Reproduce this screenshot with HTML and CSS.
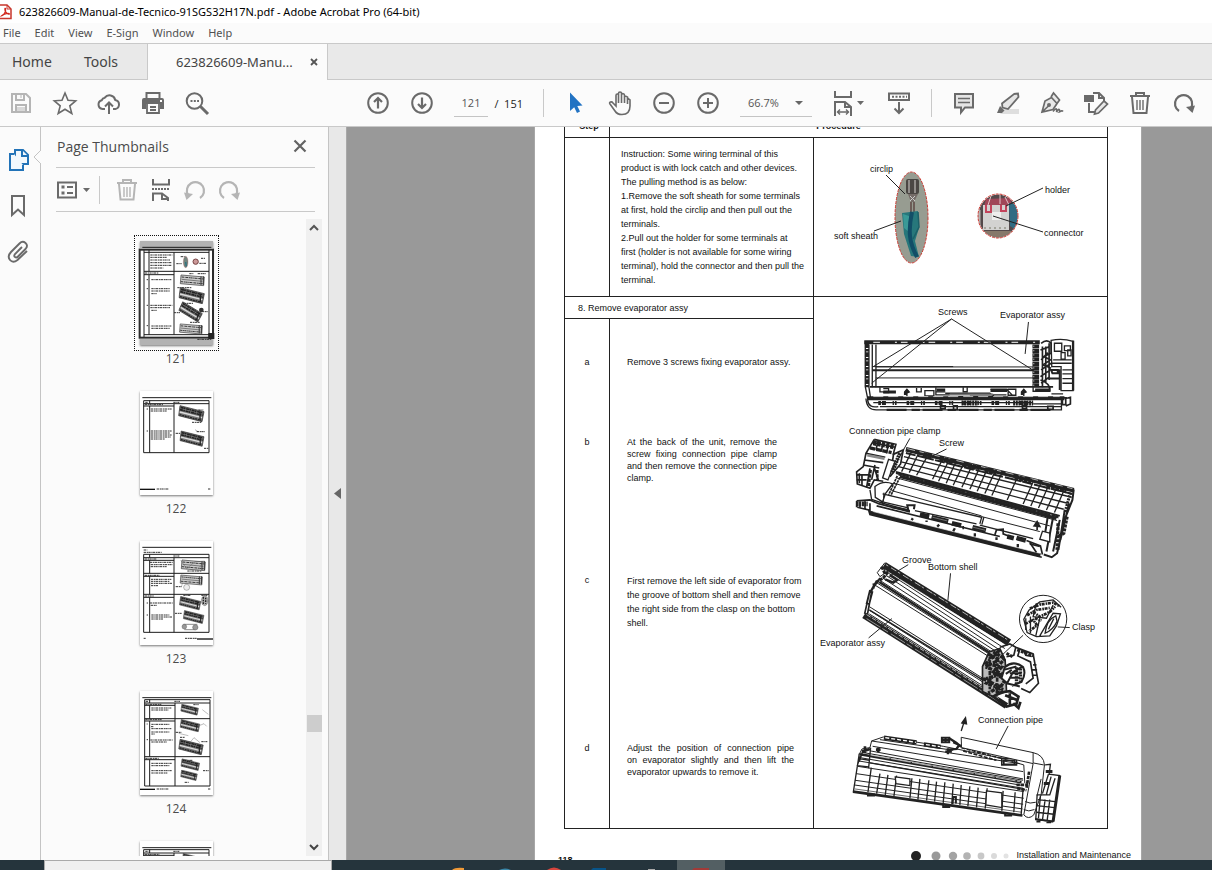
FILE: index.html
```html
<!DOCTYPE html>
<html lang="en">
<head>
<meta charset="utf-8">
<title>623826609-Manual-de-Tecnico-91SGS32H17N.pdf - Adobe Acrobat Pro (64-bit)</title>
<link rel="stylesheet" href="styles.css">
</head>
<body>
<svg class="defs" aria-hidden="true">
  <defs>
    <symbol id="unit" viewBox="0 0 80 52">
      <path d="M6 2L78 20L72 50L2 32Z" fill="#777" stroke="#222" stroke-width="2"/>
      <path d="M8 7L75 24M6 14L74 31" stroke="#222" stroke-width="5" stroke-dasharray="9 1 5 2"/>
      <path d="M5 21L72 38" stroke="#ddd" stroke-width="4"/>
      <path d="M5 29L70 46" stroke="#222" stroke-width="4" stroke-dasharray="6 2"/>
      <path d="M66 20V46" stroke="#222" stroke-width="4"/>
    </symbol>
    <symbol id="unit-light" viewBox="0 0 80 40">
      <path d="M6 4L76 10L74 36L4 30Z" fill="#ccc" stroke="#333" stroke-width="2"/>
      <path d="M8 10L74 16M6 24L72 30" stroke="#333" stroke-width="3" stroke-dasharray="7 2 3 1"/>
      <path d="M8 17L70 23" stroke="#777" stroke-width="3"/>
      <path d="M66 8V34M73 8V34" stroke="#333" stroke-width="3"/>
    </symbol>
  </defs>
</svg>
<div class="app">
  <header class="titlebar">
    <svg class="logo" viewBox="0 0 14 16"><path d="M-1 1H7L11 5V14.500H-1Z" fill="#fff" stroke="#c8372d" stroke-width="1.500"/><path d="M7 1V5H11" fill="none" stroke="#c8372d"/><path d="M2 11.500C4 11 6 8 5.500 4.500C5 4 4.500 5 5.500 7.500C6.500 9.500 8 10.500 9.500 10C9 9 4 9.500 2 11.500Z" fill="none" stroke="#d2281e" stroke-width="1.300"/></svg>
    <span>623826609-Manual-de-Tecnico-91SGS32H17N.pdf - Adobe Acrobat Pro (64-bit)</span>
  </header>
  <nav class="menubar">
    <button>File</button><button>Edit</button><button>View</button><button>E-Sign</button><button>Window</button><button>Help</button>
  </nav>
  <div class="tabs">
    <button class="tab-home">Home</button>
    <button class="tab-tools">Tools</button>
    <div class="tab-doc"><span>623826609-Manu...</span>
      <button class="tab-close" aria-label="Close tab"><svg viewBox="0 0 8 8"><path d="M1 1L7 7M7 1L1 7" stroke="#555" stroke-width="1.800"/></svg></button>
    </div>
  </div>
  <div class="toolbar">
    <div class="group">
      <button class="tool faded" aria-label="Save"><svg viewBox="0 0 24 24"><path d="M3 3H17L21 7V21H3Z"/><path d="M7 3V9H15V3M7 21V14H17V21"/><path d="M8 17H16M8 19H16M12 4V7" stroke-width="1"/></svg></button>
      <button class="tool" aria-label="Star"><svg viewBox="0 0 24 24"><path stroke-width="1.600" d="M12 2L15 9.300L22.700 9.800L16.800 14.900L18.800 22.500L12 18.300L5.200 22.500L7.200 14.900L1.300 9.800L9 9.300Z"/></svg></button>
      <button class="tool" aria-label="Upload"><svg viewBox="0 0 24 24"><path d="M8 18H5.500A4.500 4.500 0 0 1 4.800 9.200A4 4 0 0 1 7.800 6.700A5.800 5.800 0 0 1 18.200 9A4.600 4.600 0 0 1 18.500 18H16"/><path d="M12 23V12M8 15.500L12 11.500L16 15.500"/></svg></button>
      <button class="tool" aria-label="Print"><svg viewBox="0 0 24 24"><path d="M5.500 7V2H18.500V7"/><path class="solid" d="M1 9Q1 7 3 7H21Q23 7 23 9V18H19V13H5V18H1Z"/><path d="M6 13V22H18V13M9 16H15M9 19H15" stroke-width="1.800"/><path d="M19 10H21" stroke="#fff"/></svg></button>
      <button class="tool" aria-label="Find"><svg viewBox="0 0 24 24"><circle cx="9.500" cy="10" r="7.800"/><path d="M15.500 15.500L23 23" stroke-width="3"/><path d="M5.500 10H14" stroke-dasharray="2 1.300"/></svg></button>
    </div>
    <div class="group view">
      <button class="tool" aria-label="Previous page"><svg viewBox="0 0 24 24"><circle cx="12" cy="12" r="9.800"/><path d="M12 17.500V7M8 11L12 7L16 11" stroke-width="2.200"/></svg></button>
      <button class="tool" aria-label="Next page"><svg viewBox="0 0 24 24"><circle cx="12" cy="12" r="9.800"/><path d="M12 6.500V17M8 13L12 17L16 13" stroke-width="2.200"/></svg></button>
      <label class="pager"><input type="text" value="121" aria-label="Page number"><span>/&nbsp; 151</span></label>
      <i class="sep"></i>
      <button class="tool" aria-label="Select"><svg viewBox="0 0 24 24"><path d="M6 1.500L18.500 14.500L13.300 15L16 20.500L13 22L10.200 16.300L6 20Z" fill="#2273c3" stroke="none"/></svg></button>
      <button class="tool" aria-label="Hand"><svg viewBox="0 0 24 24"><path stroke-width="1.600" d="M8 13V4.500Q8 3 9.300 3T10.500 4.500V2.500Q10.500 1 12 1T13.500 2.500V3.500Q14 2.500 15.300 2.700T16.500 4.500V6Q17 5 18.500 5.400T19.500 7L22 9V15Q22 23.500 14 23.500Q9 23.500 7 20L2 13Q1 11.500 2.500 11T5 12L8 15ZM10.500 4V12M13.500 3V12M16.500 5V12M19.500 7V13"/></svg></button>
      <button class="tool" aria-label="Zoom out"><svg viewBox="0 0 24 24"><circle cx="12" cy="12" r="9.800"/><path d="M7 12H17"/></svg></button>
      <button class="tool" aria-label="Zoom in"><svg viewBox="0 0 24 24"><circle cx="12" cy="12" r="9.800"/><path d="M7 12H17M12 7V17"/></svg></button>
      <div class="zoom"><select aria-label="Zoom level"><option>66.7%</option></select></div>
      <button class="tool fit" aria-label="Fit width"><svg viewBox="0 0 35 26"><path d="M3 1V7H19V1M3 26V12H13L19 17V26M13 12V17H19"/><path d="M5 22H17M8 19.500L5.500 22L8 24.500M14 19.500L16.500 22L14 24.500" stroke-width="1.400"/><path class="solid" d="M25 11H32L28.500 15Z"/></svg></button>
      <button class="tool" aria-label="Keyboard"><svg viewBox="0 0 24 24"><path d="M2 2.500H22V9H2Z"/><path d="M5 5.700H20" stroke-dasharray="2 1.500"/><path d="M12 11V22M7.500 17.500L12 22L16.500 17.500"/></svg></button>
      <i class="sep"></i>
      <button class="tool" aria-label="Comment"><svg viewBox="0 0 24 24"><path d="M3 3H21V16.500H13L9 21.500V16.500H3Z" fill="#e5e5e5"/><path d="M6 7.500H18M6 11.500H18" stroke-width="1.400"/></svg></button>
      <button class="tool" aria-label="Highlight"><svg viewBox="0 0 24 24"><path d="M8 18H23V23H4Z" fill="#dedede" stroke="none"/><path fill="#e5e5e5" stroke-width="1.800" d="M18 3L22 2.500L22.500 6L12 18L6.500 16.500L6 12.500Z"/><path class="solid" d="M4 15L8.500 19.500L6 22H1Z"/></svg></button>
      <button class="tool" aria-label="Sign"><svg viewBox="0 0 24 24"><path fill="#e8e8e8" stroke-width="1.700" d="M2 21L5 10L11.500 6.500L17 12.500L13 18.500ZM2 21L9 14.500M11 6L13.500 2L19.500 9L17 12.500"/><circle cx="9" cy="14" r="1"/><path stroke-width="1.600" d="M13 20.500Q16 17 16.500 18T16.500 21Q19 17 19.500 19T19.500 21Q22 19 23 20.500"/></svg></button>
      <button class="tool" aria-label="Edit PDF"><svg viewBox="0 0 24 24"><path d="M9 2H15L20 7V10M5 12V21H11M15 2V7H20"/><rect class="solid" x="0" y="4" width="10" height="7"/><path fill="#e8e8e8" stroke-width="1.700" d="M20 10L23.500 13L14.500 22L10.500 23L11.500 19Z"/></svg></button>
      <button class="tool" aria-label="Delete"><svg viewBox="0 0 24 24"><path d="M2 5H22M8 4.500V2H16V4.500M4 6L5.500 22H18.500L20 6"/><path d="M9 9V19M12 9V19M15 9V19" stroke-width="1.400"/></svg></button>
      <button class="tool" aria-label="Rotate"><svg viewBox="0 0 24 24"><path stroke-width="2.200" d="M7 20A8.600 8.600 0 1 1 19 17"/><path class="solid" d="M14 16L23 14.500L20.500 22Z"/></svg></button>
    </div>
  </div>

  <main class="workspace">
    <nav class="rail">
      <button aria-label="Page thumbnails"><svg viewBox="0 0 24 24"><path class="blue" d="M8 2H16L21 7V16H8Z" stroke-width="2"/><path class="blue" d="M15 2V8H21M7 6H3V22H16V17" stroke-width="2"/></svg></button>
      <button aria-label="Bookmarks"><svg viewBox="0 0 24 24"><path d="M5 2H17V21L11 15.500L5 21Z" stroke-width="2"/></svg></button>
      <button aria-label="Attachments"><svg viewBox="0 0 24 24"><path stroke-width="1.900" d="M15 7L8 14Q6.500 16 8 17T11 16.500L18.500 9Q21.500 5.500 18.500 3T12.500 3.500L4 12Q0 16.500 3 20T10.500 20L20 11M11 11L13.500 8.500"/></svg></button>
      <svg class="notch" viewBox="0 0 8 14"><path d="M8 0L1 7L8 14" fill="#fbfbfb" stroke="#c4c4c4"/></svg>
    </nav>
    <aside class="panel">
      <div class="panel-head"><h2>Page Thumbnails</h2><button aria-label="Close panel"><svg viewBox="0 0 14 14"><path d="M1.500 1.500L12.500 12.500M12.500 1.500L1.500 12.500" stroke="#636363" stroke-width="2.200"/></svg></button></div>
      <div class="panel-tools">
        <button class="tool options" aria-label="Options"><svg viewBox="0 0 34 24"><path d="M2 4.500H20V19.500H2Z"/><path d="M5.500 9H8.500M5.500 15H8.500" stroke-width="3"/><path d="M11 9H17M11 15H17"/><path class="solid" d="M27 10H34L30.500 14Z"/></svg></button>
        <i class="sep"></i>
        <button class="tool faded" aria-label="Delete pages"><svg viewBox="0 0 24 24"><path d="M2 5H22M8 4.500V2H16V4.500M4 6L5.500 21.500H18.500L20 6"/><path d="M9 9V19M12 9V19M15 9V19" stroke-width="1.400"/></svg></button>
        <button class="tool" aria-label="Split pages"><svg viewBox="0 0 24 24"><path d="M4 1V6.500H20V1M4 23V15.500H13L19 20V23M13 15.500V21H20"/><path d="M3 11H21" stroke-dasharray="2 1"/></svg></button>
        <button class="tool faded" aria-label="Rotate left"><svg viewBox="0 0 24 24"><path stroke-width="2.200" d="M17 20A8.600 8.600 0 1 0 5 17"/><path class="solid" d="M10 16L1 14.500L3.500 22Z"/></svg></button>
        <button class="tool faded" aria-label="Rotate right"><svg viewBox="0 0 24 24"><path stroke-width="2.200" d="M7 20A8.600 8.600 0 1 1 19 17"/><path class="solid" d="M14 16L23 14.500L20.500 22Z"/></svg></button>
      </div>
      <div class="panel-body">
        <ol class="thumbs">
          <li class="current"><svg viewBox="0 0 219 312"><rect width="219" height="22" fill="#b3b3b3"/><rect y="294" width="219" height="18" fill="#b3b3b3"/><path class="ln" d="M7 19H214M12 34H207M12 91H207M12 101H102M12 281H207M12 27V288M27 27V91M27 101V281M102 34V281M207 27V288"/><path class="tx" d="M31 42H97M31 49H80M31 57H90M31 65H94M31 73H94M31 81H70M14 96H55M20 116H24M34 116H94M20 143H24M34 143H90M34 150H90M34 158H50M20 193H24M31 193H97M31 200H90M34 208H50M20 254H24M34 255H94M34 262H90M122 47H134M109 68H125M183 52H195M178 67H198M148 98H160M173 98H198M112 140H155M132 187H160M102 215H120M185 212H203M150 244H180M172 295H215"/><ellipse cx="137" cy="63" rx="7" ry="17" fill="#71847e" stroke="#a55"/><path d="M137 63L139 76" stroke="#287080" stroke-width="4"/><circle cx="167" cy="62" r="8" fill="#c99" stroke="#744" stroke-width="3"/><use href="#unit-light" x="117" y="98" width="80" height="40"/><use href="#unit" x="115" y="138" width="80" height="52"/><use href="#unit" x="115" y="187" width="74" height="52" transform="rotate(17 152 212)"/><use href="#unit-light" x="115" y="244" width="76" height="40"/><circle cx="184" cy="207" r="7" fill="#333"/><rect x="-1" y="26" width="220" height="264" fill="none" stroke="#2a2a2a" stroke-width="6"/><rect x="205" y="276" width="18" height="18" fill="#222"/></svg><span>121</span></li>
          <li><svg viewBox="0 0 219 312"><path class="ln" d="M7 20H214M11 29H207V185H11ZM11 38H207M11 45H102M102 38V185M29 29V38M29 45V185"/><path class="tx" d="M16 34H24M100 34H118M14 41H70M20 54H24M32 54H96M32 60H80M20 120H24M32 120H97M32 126H90M32 132H97M32 138H92M32 144H75M175 57H190M156 94H185M170 122H195M107 127H121M192 172H206M50 294H86M204 294H213"/><path class="bar" d="M0 295H45"/><use href="#unit" x="113" y="42" width="82" height="52"/><use href="#unit" x="118" y="115" width="76" height="56"/><path d="M165 116L174 122M123 125L132 128" stroke="#222"/></svg><span>122</span></li>
          <li><svg viewBox="0 0 219 312"><path class="ln" d="M7 19H214M11 40H207V274H11ZM11 50H207M11 58H102M11 97H207M11 106H102M11 160H207M11 169H102M102 50V274M29 40V50M29 58V97M29 106V160M29 169V274"/><path class="tx" d="M11 27H22M11 34H65M100 45H118M14 54H50M30 64H98M32 71H98M32 77H80M14 103H58M33 115H94M33 121H88M33 127H96M33 134H54M14 165H42M20 186H24M30 186H98M32 193H50M20 222H24M34 222H88M34 228H96M34 234H70M142 90H185M107 137H125M130 163H153M184 163H202M105 217H125M11 292H17M135 292H170"/><path class="bar" d="M171 294H219"/><use href="#unit-light" x="120" y="53" width="80" height="40"/><path d="M122 58L140 83L165 62L194 60M179 78L194 60V84M125 135L130 115M140 130L148 122" fill="none" stroke="#444"/><use href="#unit-light" x="117" y="98" width="74" height="38"/><circle cx="140" cy="139" r="9" fill="#eee" stroke="#333"/><use href="#unit" x="117" y="164" width="67" height="45"/><ellipse cx="194" cy="179" rx="10" ry="15" fill="#aaa" stroke="#222" stroke-dasharray="4 1"/><path d="M190 168V190M197 170V188" stroke="#222" stroke-width="4" stroke-dasharray="5 3"/><use href="#unit" x="125" y="207" width="72" height="42"/><path d="M130 250H172M133 266H166" stroke="#555" stroke-width="2"/><circle cx="133" cy="257" r="7" fill="#999" stroke="#333"/><circle cx="166" cy="259" r="8" fill="#999" stroke="#333"/></svg><span>123</span></li>
          <li><svg viewBox="0 0 219 312"><path class="ln" d="M7 20H214M14 26H210V285H14ZM14 36H210M14 43H105M14 83H210M14 90H105M14 197H210M14 206H105M105 36V285M29 26V36M29 43V83M29 90V197M29 206V285"/><path class="tx" d="M17 31H26M103 31H120M16 40H64M34 51H94M34 57H86M16 86H65M20 99H23M34 100H88M33 107H40M34 113H94M34 123H88M34 129H45M20 146H24M31 147H98M34 153H80M16 202H56M34 217H95M34 224H88M34 239H95M34 246H82M160 41H176M107 124H124M120 139H135M184 152H202M136 208H158M189 239H206M134 274H146M50 294H86M204 294H213"/><path class="bar" d="M0 295H45"/><use href="#unit" x="111" y="38" width="76" height="36"/><use href="#unit" x="114" y="84" width="72" height="40"/><use href="#unit" x="114" y="143" width="78" height="50"/><use href="#unit" x="110" y="202" width="82" height="38"/><use href="#unit" x="107" y="236" width="80" height="34"/><path d="M152 152L162 140L180 155M180 103L192 98L200 106M187 56L205 70M116 127L145 134" fill="none" stroke="#333"/></svg><span>124</span></li>
          <li><svg viewBox="0 0 219 312"><path class="ln" d="M7 20H214M11 26H207V285H11ZM11 36H207M11 43H102M102 36V285M29 26V36M29 43V285"/><path class="tx" d="M16 31H26M100 31H118M14 40H58"/><use href="#unit" x="122" y="36" width="60" height="34"/></svg></li>
        </ol>
        <div class="scroll"><svg viewBox="0 0 10 8"><path d="M1 6L5 2L9 6" fill="none" stroke="#555" stroke-width="2"/></svg><i></i><svg viewBox="0 0 10 8"><path d="M1 2L5 6L9 2" fill="none" stroke="#444" stroke-width="2"/></svg></div>
      </div>
    </aside>
    <button class="splitter" aria-label="Collapse panel"><svg viewBox="0 0 7 11"><path d="M7 0V11L0 5.500Z" fill="#666"/></svg></button>

    <section class="canvas">
      <article class="page">
        <table class="steps">
          <colgroup><col class="c-step"><col class="c-text"><col></colgroup>
          <thead><tr><th>Step</th><th colspan="2" class="proc">Procedure</th></tr></thead>
          <tbody>
          <tr class="r-info"><td></td>
            <td class="info">Instruction: Some wiring terminal of this<br>product is with lock catch and other devices.<br>The pulling method is as below:<br>1.Remove the soft sheath for some terminals<br>at first, hold the circlip and then pull out the<br>terminals.<br>2.Pull out the holder for some terminals at<br>first (holder is not available for some wiring<br>terminal), hold the connector and then pull the<br>terminal.</td>
            <td class="fig"><svg viewBox="814 138 293 158">
              <clipPath id="e1"><ellipse cx="911.500" cy="217.500" rx="16.500" ry="45.500"/></clipPath>
              <clipPath id="e2"><ellipse cx="998" cy="216" rx="19.500" ry="21.500"/></clipPath>
              <g clip-path="url(#e1)"><rect x="890" y="170" width="40" height="96" fill="#979c91"/><rect x="906" y="179" width="13" height="15" rx="2" fill="#4b4744"/><path d="M909 180V193M915 180V193" stroke="#a9a5a2" stroke-width="1.500"/><path d="M908 194L918 194L914 202H911Z" fill="#756c68"/><path d="M910 196L915 201M915 196L910 201" stroke="#ccc"/><path d="M911 202V212M914 202V212" stroke="#5e4744" stroke-width="1.500"/><path d="M902 213L918 211L919 228L915 241L919 257L911 256L904 234Z" fill="#27777b"/><path d="M903 214L909 216V232L904 228Z" fill="#3a9a97"/><path d="M912 212Q909 226 910 236T917 257" fill="none" stroke="#124e67" stroke-width="4"/><path d="M918 212L919 227L913 239" fill="none" stroke="#1c6068" stroke-width="1.500"/></g>
              <ellipse cx="911.500" cy="217.500" rx="16.500" ry="45.500" fill="none" stroke="#cc3a32" stroke-dasharray="3 1"/>
              <g clip-path="url(#e2)"><rect x="976" y="192" width="46" height="48" fill="#54494b"/><path d="M986 199L1010 198L1012 206H984Z" fill="#a04658"/><path d="M991 196L988 205M1000 193V204M1005 197L1009 205" stroke="#e1c3c7"/><rect x="983" y="205" width="26" height="25" fill="#d3d2d1"/><path d="M986 205V212H991V205M1001 205V211H1006V205" fill="none" stroke="#c3435b" stroke-width="2"/><rect x="992" y="212" width="9" height="8" fill="#eee"/><path d="M1009 203L1018 205V231L1010 226Z" fill="#316b83"/><path d="M976 231H1020V240H976Z" fill="#86786a"/><path d="M984 228H1009" stroke="#776" stroke-dasharray="2 3"/><path d="M979 210V228" stroke="#b9b5b2" stroke-width="3"/></g>
              <ellipse cx="998" cy="216" rx="20" ry="22" fill="none" stroke="#cc3a32" stroke-dasharray="3 1"/>
              <path class="ld" d="M886 175L905 194M874 231L901 221M1043 188L1006 206M993 216L1043 232"/>
              <text x="870" y="172">circlip</text><text x="834" y="239">soft sheath</text><text x="1045" y="193">holder</text><text x="1044" y="236">connector</text>
            </svg></td></tr>
          <tr class="r-title"><td colspan="2" class="title">8. Remove evaporator assy</td>
            <td rowspan="5" class="fig"><svg viewBox="814 297 293 531">
              <!-- front view of the evaporator -->
              <g class="dw" transform="translate(820 300) scale(.333)">
                <path class="f" d="M133 122H660V262H700V272H760V330H170L143 310L133 262Z" stroke="none"/>
                <path d="M133 127H660" stroke-width="12"/><path d="M160 127H650" stroke="#fff" stroke-width="3" stroke-dasharray="20 45 6 12"/>
                <path d="M136 124V260L144 300M147 134V262L152 296M157 134V262M168 134V262"/><path d="M141 130V262" stroke-width="12" stroke-dasharray="14 3 8 2"/>
                <path d="M157 200H400M168 201H640" stroke-width="3"/><path d="M157 211H640" stroke-width="6"/><path d="M168 234H640" stroke-width="3"/><path d="M150 261H700" stroke-width="5"/>
                <path d="M648 134V262" stroke-width="20" stroke-dasharray="12 1"/><path d="M642 137V260" stroke="#fff" stroke-width="2" stroke-dasharray="4 9"/>
                <path d="M664 130Q682 115 694 130V160L672 170L692 180L670 195L694 205M662 150L690 140M664 180L684 158M664 210L694 190M662 230L692 210M664 250L690 230M668 140V262M678 140V250M688 130V240M662 240Q692 250 690 272H664" stroke-width="5"/>
                <path d="M694 121Q728 114 760 124V272H724V200H696ZM704 130H726V154H704ZM734 138H752V152H734ZM724 158H736V178H724ZM744 150H754V168H744ZM700 180H756M696 190H756M728 210H758M728 222H758M728 236H758M728 250H758"/>
                <path d="M760 122V272" stroke-width="7"/><path d="M694 210H714V220H698ZM690 236H722M720 208V270" stroke-width="6"/>
                <path d="M180 262V276H220M190 266H206V278H190M290 264V276H304V264M315 272H342V288H315ZM348 262V285H390M350 276H376M376 280H510L530 296M390 290H550M430 262V275H442V262M450 285H560M512 268H560L580 288M565 268H588V286H565ZM640 262V274H690V262M695 282H730"/>
                <path d="M261 268V288M254 276L261 268L268 276L254 282ZM612 268V288M605 276L612 268L619 276L605 282Z" fill="#222"/>
                <path d="M190 276H228M350 270H376M512 272H562M646 270H690" stroke-width="9"/><path d="M390 284H520" stroke="#777" stroke-width="6"/>
                <path d="M142 295H734" stroke-width="12"/><path d="M160 290H720" stroke="#fff" stroke-width="2" stroke-dasharray="30 15"/>
                <path d="M160 308H640M180 320H725M170 330H725V300M143 300Q146 326 175 320M138 296Q140 332 172 330M640 312H725"/><path d="M175 309H640" stroke-width="12" stroke-dasharray="8 3 12 20 4 3 5 30"/><path d="M425 309H475M580 309H640" stroke-width="15" stroke-dasharray="6 2"/><path d="M200 330H700" stroke-width="7" stroke-dasharray="60 15 25 8"/>
                <path d="M362 318H376V326H362ZM401 318H412V329H401ZM684 319H700V328H684ZM608 318H620V326H608Z" stroke-width="5"/><path d="M728 294H738V314H728ZM738 296L752 292V312L738 318" stroke-width="5"/>
                <path d="M395 57L160 200M395 57L155 250M395 57L642 212M626 66L616 162" stroke-width="3"/>
              </g>
              <text x="938" y="315">Screws</text><text x="1000" y="318">Evaporator assy</text>
              <!-- rear view with pipe clamp -->
              <g class="dw" transform="translate(820 420) scale(.333)">
                <path class="f" d="M163 57L228 72L222 120L258 85L762 208L700 412L665 412L145 280L160 205L112 200L110 155Z" stroke="none"/>
                <path d="M163 58L228 73L222 95L216 135L196 175M163 58L138 100L130 140L110 156L112 192L150 205L163 180L190 184M138 100L196 112M133 120L190 128M130 135L178 144M158 68L225 82M175 60L168 90M190 63L184 96M206 67L200 100" stroke-width="5"/>
                <path d="M160 68L222 80" stroke-width="16" stroke-dasharray="10 3"/><path d="M150 84L215 98" stroke-width="10" stroke-dasharray="16 3"/><path d="M142 106L194 116" stroke="#888" stroke-width="8"/>
                <path d="M118 160V190M126 162V198M110 165H150M110 180H140M150 145L140 202M165 135L155 180M162 140L175 180" stroke-width="5"/><path d="M152 150L146 200M172 150V182" stroke-width="8" stroke-dasharray="10 3"/>
                <path d="M206 118L226 124L204 180L188 174Z" fill="#fff" stroke-width="4"/><path d="M240 100L215 160" stroke-width="12" stroke-dasharray="6 2"/><path d="M218 104L250 90L242 132L210 170" stroke-width="5"/>
                <path d="M258 88L762 211" stroke-width="14"/><path d="M262 86L758 206" stroke="#fff" stroke-width="2" stroke-dasharray="24 14"/>
                <path d="M258 99L758 222" stroke-width="6" stroke-dasharray="30 6 50 4"/><path d="M252 110L756 232M244 126L744 250M236 140L732 268"/><path d="M228 156L720 288" stroke-width="6"/>
                <path d="M275 95L245 155M296 100L268 158M322 110L290 166M368 118L338 178M386 124L356 184M407 128L379 190M430 134L400 196M455 140L426 202M478 146L450 208M500 152L472 214M524 158L495 221M545 162L516 227M592 174L562 240M640 186L610 252M662 192L633 258M686 198L656 264M710 204L680 270M734 208L704 278" stroke-width="4"/>
                <path d="M310 104L335 110M360 116L400 126M430 133L475 144M495 150L530 158M585 172L635 184M680 198L740 212" stroke-width="16" stroke-dasharray="12 2"/>
                <path d="M235 165L716 294M230 174L712 302M222 190L690 318M215 212L485 288M192 218L190 245M485 290L660 335" stroke-width="3"/><path d="M240 170L710 296" stroke-width="9"/><path d="M280 174L690 284" stroke-width="3"/><path d="M228 160L716 291" stroke-width="5" stroke-dasharray="40 4"/>
                <path d="M232 168L206 225M240 172L212 228" stroke-width="5" stroke-dasharray="8 2"/>
                <path d="M165 200Q190 180 218 192L196 222L188 246L166 232ZM150 210L155 238L188 250L270 272M486 290L480 312M492 292L486 314" stroke-width="4"/>
                <path d="M188 222L485 292M188 246L265 264M285 272L470 312M480 316L640 356"/>
                <path d="M762 208L758 240L738 290L712 400L696 412L672 404M735 270L716 390M748 250L722 360M700 292L680 395M720 300L700 395M684 290L676 340" stroke-width="6"/><path d="M690 340L668 334L660 358L690 366Z" fill="#fff"/><path d="M742 290L732 340L716 350M715 310L712 390" stroke-width="10" stroke-dasharray="9 3"/><path d="M752 218L736 276" stroke-width="9" stroke-dasharray="6 3"/>
                <path d="M110 243L150 240L178 252L270 276M112 262L146 270L150 284L666 412M150 250V276M110 243V262M120 240V264M135 242V268M170 258L540 350" stroke-width="5"/><path d="M110 252H144" stroke-width="14" stroke-dasharray="6 2"/><path d="M150 278L662 406" stroke-width="11"/><path d="M160 275L660 400" stroke="#fff" stroke-width="2"/>
                <path d="M215 262L265 270L262 256H284L282 268" stroke-width="6"/><path d="M300 284L328 290M335 292L385 304M396 310L424 317M458 322L498 332M562 350L582 355M590 354L618 362" stroke-width="14"/><path d="M338 292L382 303M460 322L496 331" stroke="#999" stroke-width="2"/>
                <path d="M280 300L274 296M320 302V306M358 314L352 320M405 325L400 334M465 340V350M530 352V360M594 372V382" stroke-width="7"/><path d="M525 345L530 330L550 328V342L570 350M430 318V328M620 362L662 378L668 404M630 368L650 398" stroke-width="5"/>
                <path d="M652 305V330M643 318L652 305L660 320ZM630 372L660 380" fill="#222" stroke-width="5"/>
                <path d="M270 55L218 148M380 87L322 116" stroke-width="3"/>
              </g>
              <text x="849" y="434">Connection pipe clamp</text><text x="939" y="446">Screw</text>
              <!-- left side lifted out of the groove -->
              <g class="dw" transform="translate(820 550) scale(.333)">
                <path class="f" d="M195 38L572 270L555 300L480 430L560 470L132 205L180 75Z" stroke="none"/>
                <path d="M192 46L568 278" stroke-width="22"/><path d="M198 44L564 270" stroke="#fff" stroke-width="2" stroke-dasharray="8 10 20 4"/><path d="M195 60L550 282" stroke="#fff" stroke-width="2" stroke-dasharray="50 4"/>
                <path d="M195 38L172 68L180 80L206 62M206 70L555 296M198 76L545 304M188 84L540 312M178 90L534 318M170 98L520 320M166 106L510 322" stroke-width="3"/><path d="M178 96L525 318" stroke-width="7"/><path d="M204 66L190 84L170 96M185 50L196 72" stroke-width="9" stroke-dasharray="10 3"/><path d="M210 76L232 90L220 98L196 88" stroke-width="7"/>
                <path d="M180 84L156 120L142 196M170 92L148 130L134 192M160 100L162 116M150 120L140 160L148 162L158 124" stroke-width="5"/>
                <path d="M148 170L490 386M150 182L488 396M148 192L486 406M144 200L490 420" stroke-width="3"/><path d="M148 180L488 390" stroke-width="4"/>
                <path d="M132 196L560 468" stroke-width="19"/><path d="M140 194L540 448" stroke="#fff" stroke-width="2" stroke-dasharray="14 5"/><path d="M140 206L550 464" stroke="#fff" stroke-width="1.500" stroke-dasharray="50 6 20 10"/>
                <path d="M508 306L488 350V425L520 440L560 425L556 330L540 296Z" fill="#bbb" stroke-width="5"/>
                <path d="M505 312L540 330L495 350L548 372L492 388L540 410L505 430M540 300L500 340L545 352L500 400L552 420M520 306L555 326L520 366L556 390L530 430" stroke-width="10" stroke-dasharray="12 4 7 2"/>
                <path d="M510 320V425M532 310V425" stroke-width="8" stroke-dasharray="8 5 13 4"/>
                <path d="M540 292L570 282L588 292L640 312L656 400L630 428L604 416M588 292L582 316L560 320M600 298L594 318L632 336L640 385L618 402M612 302L618 316L636 320M640 345H650M638 360H652M636 376H654" stroke-width="5"/>
                <path d="M592 300L642 318M560 310L580 322" stroke-width="9" stroke-dasharray="9 3"/>
                <path d="M555 352Q580 330 608 350L580 366L562 400L545 385ZM610 352Q620 372 605 396L576 408M570 370H605M568 384H600M560 400L600 410M552 360L590 350M558 372L576 360" fill="#fff" stroke-width="6"/><path d="M590 352V408M602 356V400" stroke-width="10" stroke-dasharray="6 3"/>
                <path d="M520 440L560 470L590 462L596 440L570 424L540 428ZM570 430V466M556 436L590 450M580 460L596 474L602 456" stroke-width="8"/>
                <circle cx="670" cy="207" r="71" fill="#fff" stroke-width="3"/>
                <path d="M628 180L660 156L700 150L724 172M628 180L612 208L622 248L650 260L690 258L710 228L722 192L700 190L660 258" stroke-width="4"/>
                <path d="M630 176L660 164L700 158L718 168M622 196L650 180L690 174M640 186L660 200L690 186L706 170M616 222L640 210L652 226L628 244M645 205L665 212" stroke-width="8" stroke-dasharray="9 3 5 2"/>
                <path d="M650 160L640 200L680 205L700 165M660 205L648 258M676 250Q680 210 708 198L712 214Q700 240 676 250ZM686 238L702 206M618 205V240M632 200V250" stroke-width="4"/>
                <path d="M610 256L540 322M714 231L750 233M265 44L206 80M392 70L384 152M146 264L216 206" stroke-width="3"/>
              </g>
              <text x="902" y="563">Groove</text><text x="928" y="570">Bottom shell</text><text x="1072" y="630">Clasp</text><text x="820" y="646">Evaporator assy</text>
              <!-- connection pipe adjustment -->
              <g class="dw" transform="translate(820 705) scale(.333)">
                <path class="f" d="M155 100L425 125L720 210L700 350L100 262L118 140Z" stroke="none"/>
                <path d="M118 148L126 132L150 128L155 108L190 96L370 124L410 132L545 160L612 180L615 235M155 108L600 176M158 124L610 200M152 138L610 222" stroke-width="3"/>
                <path d="M192 98L290 112M312 118L362 126" stroke-width="13"/><path d="M196 98L288 112M318 119L360 125" stroke="#fff" stroke-width="4" stroke-dasharray="12 6"/><path d="M180 104L400 136" stroke-width="3"/>
                <path d="M120 148L605 232" stroke-width="8"/><path d="M125 142L610 226M120 158L610 242M116 168L610 250" stroke-width="3"/><path d="M150 150L600 230" stroke="#fff" stroke-width="2" stroke-dasharray="60 4"/><path d="M150 174L615 254" stroke-width="4"/>
                <path d="M118 146L100 262M130 134L118 170M152 128L146 190M122 152L112 182L146 186M122 162L148 166" stroke-width="4"/><path d="M126 140L150 132M135 124V144M168 134H182M175 128V142" stroke-width="8"/>
                <path d="M112 184L612 260M108 206L612 280M105 226L610 298M102 240L608 312" stroke-width="3"/><path d="M99 260L608 332" stroke-width="8"/><path d="M104 252L606 322" stroke-width="2"/>
                <path d="M154 188L144 262M180 206L170 266M204 210L196 270M230 212L222 274M276 220L270 280M300 222L294 284M327 226L320 287M350 230L344 290M375 232L370 294M400 236L396 297M424 240L420 300M450 244L444 304M475 248L470 308M502 250L496 311M550 258L546 318M586 262L582 322M610 250L604 330" stroke-width="4"/>
                <path d="M144 264V272H162V266M370 296V306H388V300M556 322V332H574V326M398 298L400 276H408V296" stroke-width="6"/>
                <path d="M226 216L270 222V242L228 236ZM500 258L546 264V308L498 300Z" fill="#fff"/>
                <path d="M366 98H388V112H366ZM366 105H388M377 98V112" stroke-width="6"/><path d="M388 100L410 114L424 126M400 112L418 120L410 132L384 134M376 140H396M384 130V148" stroke-width="7"/><path d="M425 128L520 154L545 160M430 138L530 166" stroke-width="5" stroke-dasharray="12 4"/><path d="M546 160H590V180H546ZM552 166H584V178H552Z" stroke-width="5"/>
                <path d="M424 97L640 143Q672 150 674 180L664 270L642 330Q626 346 612 330L640 176L425 128Z" fill="#fff" stroke-width="3"/><path d="M640 143V174L672 180M664 222L652 272M616 290Q630 298 648 292M612 314Q626 322 644 314" stroke-width="3"/>
                <path d="M676 180L692 178L688 208L720 212L700 350L648 344L652 270H690L706 220M686 208L668 266M694 215L680 268" stroke-width="4"/><path d="M678 200H698M672 236H688M720 212L700 350" stroke-width="9"/>
                <path d="M676 284L668 346M690 284L682 348M654 284L706 290M652 302L704 308M650 322L702 328M662 272L656 340" stroke-width="4"/><path d="M646 342L700 350M650 350H662M680 352H694" stroke-width="6"/><path d="M590 240H625M592 250L620 256M628 200L620 250" stroke-width="8" stroke-dasharray="10 3"/>
                <path d="M424 78L435 44" stroke-width="4"/><path d="M426 54L437 38L440 57Z" fill="#222"/><path d="M565 63L529 132" stroke-width="3"/>
              </g>
              <text x="978" y="723">Connection pipe</text>
            </svg></td></tr>
          <tr class="r-a"><td class="no">a</td><td class="txt">Remove 3 screws fixing evaporator assy.</td></tr>
          <tr class="r-b"><td class="no">b</td><td class="txt"><p class="just narrow">At the back of the unit, remove the screw fixing connection pipe clamp and then remove the connection pipe clamp.</p></td></tr>
          <tr class="r-c"><td class="no">c</td><td class="txt loose">First remove the left side of evaporator from<br>the groove of bottom shell and then remove<br>the right side from the clasp on the bottom<br>shell.</td></tr>
          <tr class="r-d"><td class="no">d</td><td class="txt"><p class="just wide">Adjust the position of connection pipe on&nbsp;evaporator slightly and then lift the evaporator upwards to remove it.</p></td></tr>
          </tbody>
        </table>
        <footer class="page-foot"><b>118</b>
          <svg class="dots" viewBox="0 0 100 12"><circle cx="6" cy="7" r="5" fill="#222"/><circle cx="26" cy="7" r="4.500" fill="#999"/><circle cx="43" cy="7" r="4.200" fill="#a3a3a3"/><circle cx="57" cy="7" r="3.800" fill="#b3b3b3"/><circle cx="71" cy="7" r="3.400" fill="#c8c8c8"/><circle cx="84" cy="7" r="3" fill="#dadada"/><circle cx="96" cy="7" r="2.500" fill="#e3e3e3"/></svg>
          <span>Installation and Maintenance</span></footer>
      </article>
    </section>
  </main>
  <footer class="taskbar"><i class="search"></i>
    <svg viewBox="0 0 400 10"><rect x="226" width="48" height="10" fill="#535f63"/><path d="M1 10Q4 7 13 8V10Z" fill="#f09a38"/><path d="M48 10Q54 7 60 10Z" fill="#3a86a8"/><path d="M96 10Q103 5 110 10Z" fill="#d9453d"/><path d="M142 8H155V10H140Z" fill="#07548a"/><path d="M197 9H204V10H197Z" fill="#aaa"/><path d="M243 8H258V10H241Z" fill="#a33a37"/></svg>
  </footer>
</div>
</body>
</html>
```
FILE: styles.css
```css
* { box-sizing: border-box; }
body { margin: 0; font-family: "Open Sans", "Noto Sans", sans-serif; font-size: 12px; color: #4b4b4b; background: #fbfbfb; }
button { border: 0; padding: 0; background: none; font: inherit; color: inherit; display: block; }
svg { display: block; }
.defs { position: absolute; width: 0; height: 0; }
.app { display: flex; flex-direction: column; height: 100vh; overflow: hidden; }
.titlebar, .menubar, .tabs { font-family: "Noto Sans", "Open Sans", sans-serif; }

.titlebar { display: flex; align-items: center; gap: 5px; height: 23px; flex: none; background: #fff; color: #000; font-size: 11px; white-space: nowrap; }
.logo { width: 14px; height: 16px; }
.menubar { display: flex; gap: 14px; height: 20px; flex: none; padding: 0 0 2px 3px; font-size: 11px; align-items: center; color: #505050; }

.tabs { display: flex; height: 37px; flex: none; background: #e9e9e9; border-top: 1px solid #c9c9c9; border-bottom: 1px solid #c9c9c9; font-size: 14px; color: #444; }
.tab-home { padding-left: 12px; width: 84px; text-align: left; }
.tab-tools { width: 63px; text-align: left; }
.tab-doc { display: flex; align-items: center; justify-content: space-between; width: 181px; margin-bottom: -1px; padding: 0 9px 0 28px; background: #fbfbfb; border-left: 1px solid #c9c9c9; border-right: 1px solid #c9c9c9; font-size: 13px; }
.tab-close svg { width: 8px; height: 8px; }

.toolbar { display: flex; align-items: center; height: 47px; flex: none; padding-left: 9px; border-bottom: 1px solid #c9c9c9; color: #6a6a6a; }
.group { display: flex; align-items: center; gap: 20px; }
.view { margin-left: 157px; }
.tool { width: 24px; flex: none; color: #6a6a6a; }
.tool svg { width: 100%; height: 24px; fill: none; stroke: currentColor; stroke-width: 2; overflow: visible; }
.tool .solid { fill: currentColor; stroke: none; }
.tool.faded { color: #b5b5b5; }
.tool.fit { width: 35px; }
.tool.fit svg { height: 26px; }
.sep { width: 1px; height: 28px; background: #c9c9c9; flex: none; }
.pager { display: flex; align-items: center; justify-content: space-between; width: 69px; color: #222; font-size: 11px; }
.pager input { width: 34px; height: 28px; padding: 0; border: 0; border-bottom: 1px solid #c4c4c4; background: none; text-align: center; font: inherit; color: #555; }
.pager span { white-space: nowrap; }
.zoom { position: relative; width: 72px; }
.zoom select { appearance: none; width: 100%; height: 28px; padding: 0 8px; border: 0; border-bottom: 1px solid #c4c4c4; border-radius: 0; background: none; font: inherit; font-size: 11px; color: #555; }
.zoom::after { content: ""; position: absolute; right: 9px; top: 12px; border: 4px solid transparent; border-top-color: #666; border-bottom: 0; pointer-events: none; }

.workspace { display: flex; flex: 1; min-height: 0; }
.rail { position: relative; width: 41px; flex: none; border-right: 1px solid #c4c4c4; padding: 21px 0 0 7px; display: flex; flex-direction: column; gap: 22px; }
.rail svg { width: 24px; height: 24px; fill: none; stroke: #6a6a6a; }
.rail .blue { stroke: #2273b8; fill: #f2f8fd; }
.rail .notch { position: absolute; right: -1px; top: 23px; width: 8px; height: 14px; }
.panel { display: flex; flex-direction: column; width: 288px; flex: none; border-right: 1px solid #c4c4c4; padding-left: 15px; }
.panel-head { display: flex; align-items: center; justify-content: space-between; height: 41px; margin-right: 13px; padding: 0 8px 2px 1px; border-bottom: 1px solid #c9c9c9; }
.panel-head h2 { margin: 0; font-size: 14px; font-weight: 400; }
.panel-head svg { width: 14px; height: 14px; }
.panel-tools { display: flex; align-items: center; height: 44px; gap: 10px; margin-right: 13px; border-bottom: 1px solid #c9c9c9; }
.panel-tools .options { width: 34px; }
.panel-tools .sep { margin-right: 5px; margin-left: -1px; }
.panel-body { display: flex; flex: 1; min-height: 0; padding: 7px 6px 4px 0; overflow: hidden; }
.thumbs { flex: 1; margin: 0; padding: 22px 10px 0 0; list-style: none; overflow: hidden; }
.thumbs li { display: flex; flex-direction: column; align-items: center; gap: 6px; height: 150px; line-height: 16px; }
.thumbs svg { width: 73px; height: 104px; flex: none; background: #fff; box-shadow: 0 1px 2px #777; }
.thumbs .current svg { outline: 1px dotted #111; outline-offset: 5px; overflow: visible; }
.ln { fill: none; stroke: #1c1c1c; stroke-width: 3; }
.tx { fill: none; stroke: #333; stroke-width: 3; stroke-dasharray: 7 2 4 1; }
.bar { stroke: #111; stroke-width: 4; }
.scroll { display: flex; flex-direction: column; align-items: center; width: 16px; padding: 5px 0; background: #f0f0f0; }
.scroll svg { width: 10px; height: 8px; }
.scroll i { width: 15px; height: 17px; margin: auto 0 111px; background: #cdcdcd; }
.splitter { display: flex; align-items: center; justify-content: center; width: 18px; flex: none; background: #e8e8e8; border-right: 1px solid #a8a8a8; }
.splitter svg { width: 7px; height: 11px; }

.canvas { flex: 1; min-width: 0; padding-left: 188px; background: #999; overflow: hidden; }
.page { width: 606px; margin-top: -11px; padding: 0 33px 30px 29px; background: #fff; box-shadow: 0 0 1px #eee; font-family: "Liberation Sans", Arial, sans-serif; font-size: 9px; line-height: 12px; color: #111; }
.steps { width: 100%; table-layout: fixed; border-collapse: collapse; }
.c-step { width: 45px; }
.c-text { width: 204px; }
.steps th, .steps td { border: 1px solid #222; padding: 0; vertical-align: top; }
.steps th { height: 21px; padding: 3px 0 0 4px; }
.steps .proc { padding: 3px 40px 0 0; }
.r-info { height: 159px; }
.steps .info { padding: 9px 0 0 11px; line-height: 14px; white-space: nowrap; }
.r-title { height: 22px; }
.steps .title { padding: 5px 0 0 13px; }
.r-a { height: 117px; }
.r-b { height: 138px; }
.r-c { height: 168px; }
.r-d { height: 87px; }
.steps .no, .steps .txt { border-top: 0; border-bottom: 0; }
.steps .no { text-align: center; }
.steps .txt { padding-left: 17px; white-space: nowrap; }
.steps .r-a td { padding-top: 37px; border-top: 1px solid #222; }
.steps .r-d td { border-bottom: 1px solid #222; }
.steps .loose { line-height: 14px; }
.just { margin: 0; text-align: justify; white-space: normal; }
.narrow { width: 150px; }
.wide { width: 167px; }
.fig svg { width: 100%; }
.fig text { font-size: 9px; fill: #111; }
.ld { fill: none; stroke: #222; stroke-width: 1; }
.dw { fill: none; stroke: #222; stroke-width: 4; }
.dw .f { fill: #fff; }
.page-foot { display: flex; align-items: flex-start; padding-top: 20px; margin-right: -23px; margin-left: -6px; }
.page-foot b { flex: 1; padding-top: 5px; }
.dots { width: 100px; height: 12px; margin-right: 6px; }

.taskbar { display: flex; height: 10px; flex: none; padding-left: 44px; background: #25343c; }
.search { width: 288px; background: #f0f0f0; border: 1px solid #aaa; border-bottom: 0; }
.taskbar svg { width: 400px; height: 10px; margin-left: 119px; }
```
